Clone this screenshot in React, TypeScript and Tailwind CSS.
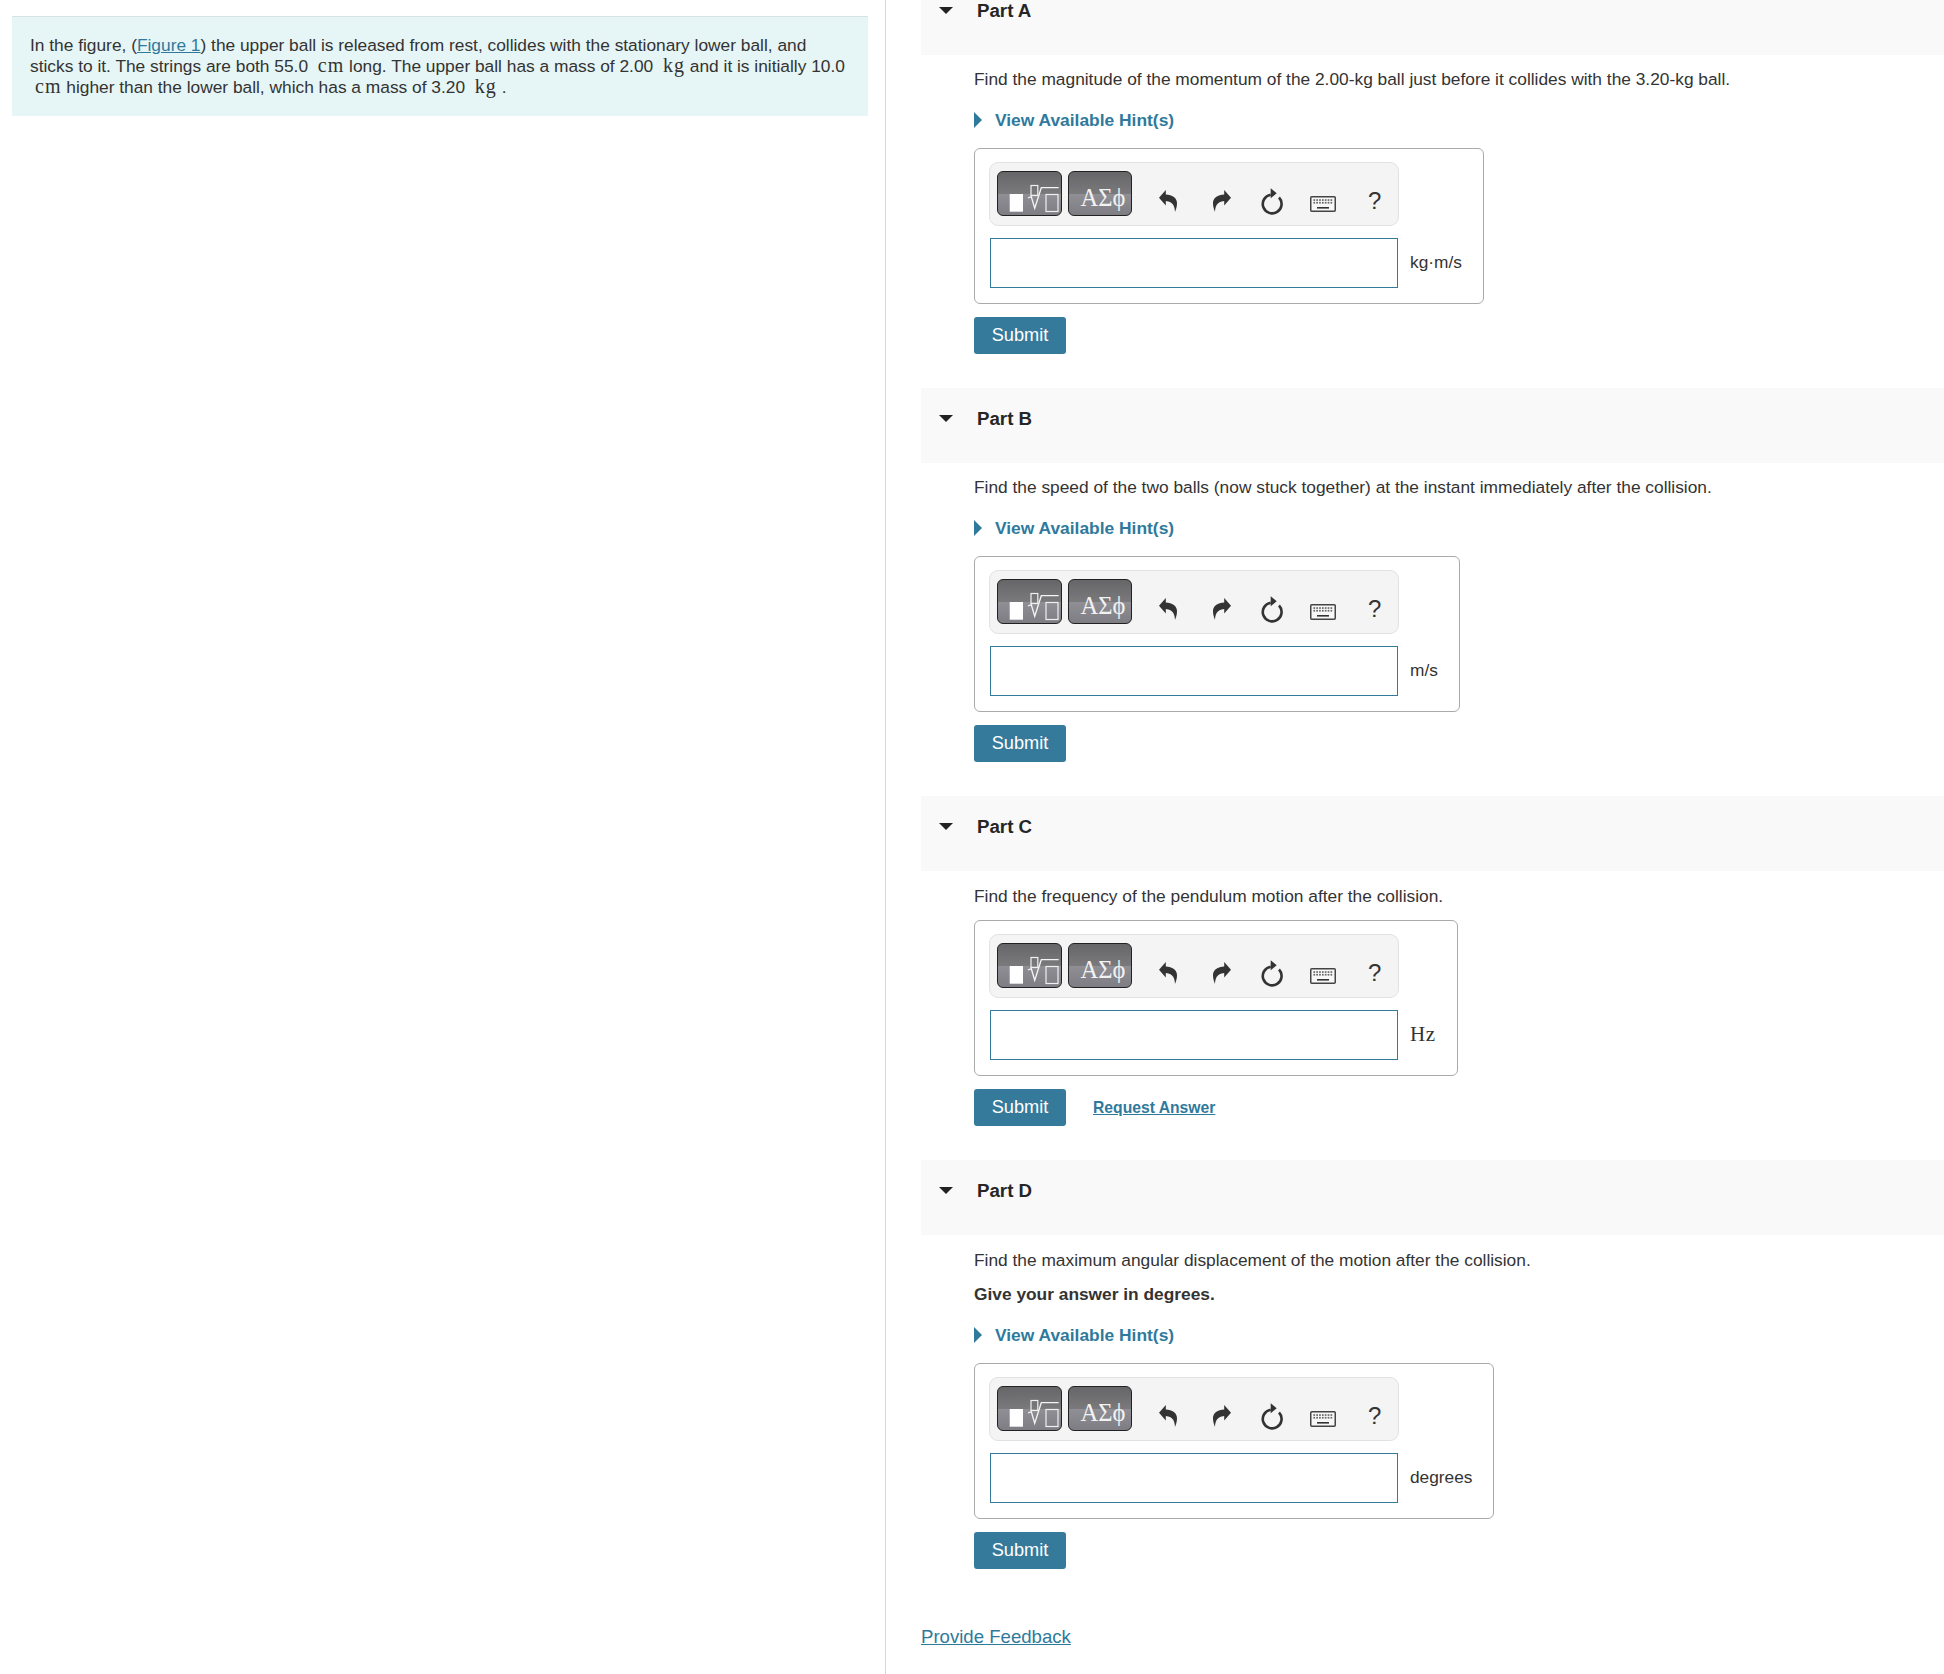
import type { ReactNode } from "react";

const SANS = "font-['Liberation_Sans',Arial,sans-serif]";
const MATH = "font-['Liberation_Serif','Times_New_Roman',serif]";

function Unit({ children }: { children: ReactNode }) {
  return <span className={`${MATH} ml-[5px] text-[20px] leading-[0] tracking-[1px]`}>{children}</span>;
}

function UndoIcon({ flip = false }: { flip?: boolean }) {
  return (
    <svg width="19" height="22" viewBox="0 0 19 22" className={flip ? "mt-[27px] -scale-x-100" : "mt-[27px]"}>
      <path d="M0 7.7 L6.8 0 V4.5 C13 4.5 18.5 8 18 14 C17.8 17 17 19.5 16 22 C15.8 17 14.5 11.5 6.8 11 V15.4 Z" fill="#333" />
    </svg>
  );
}

function ResetIcon() {
  return (
    <svg width="24" height="30" viewBox="0 0 24 30" className="mt-[22px]">
      <path d="M10.7 9.7 A9.4 9.4 0 1 0 19 12.5" fill="none" stroke="#333" strokeWidth="2.6" />
      <path d="M10.7 3.3 L16.7 8.3 L10.7 13.3 Z" fill="#333" />
    </svg>
  );
}

function KeyboardIcon() {
  const keys = [];
  for (let r = 0; r < 2; r++) {
    for (let c = 0; c < 7; c++) {
      keys.push(<rect key={`${r}-${c}`} x={3.4 + c * 2.85} y={3.2 + r * 2.7} width="1.7" height="1.7" fill="#666" />);
    }
  }
  return (
    <svg width="26" height="16" viewBox="0 0 26 16" className="mt-[33px]">
      <rect x="0.75" y="0.75" width="24.5" height="14.5" rx="1" fill="#f7f7f7" stroke="#444" strokeWidth="1.5" />
      {keys}
      <rect x="7" y="11" width="12" height="1.6" fill="#333" />
    </svg>
  );
}

function TemplateButton() {
  return (
    <div className="relative h-[45px] w-[65px] rounded-[6px] border border-[#222] bg-[linear-gradient(#666668,#7a7a7c_51%,#8f8f95_51%,#7d7d83)]">
      <svg width="65" height="45" viewBox="0 0 65 45" className="absolute -left-px -top-px">
        <rect x="12.7" y="23" width="13.3" height="17.7" fill="#fff" />
        <rect x="34" y="14.5" width="6.8" height="10" fill="none" stroke="#f0f0f0" strokeWidth="1.2" />
        <path d="M31 27 L34.3 25.7 L37.7 37.3 L44.3 16.7 H61.7" fill="none" stroke="#f4f4f4" strokeWidth="1.3" />
        <rect x="49" y="23.5" width="12" height="17" fill="none" stroke="#f0f0f0" strokeWidth="1.2" />
      </svg>
    </div>
  );
}

function SymbolButton() {
  return (
    <div className={`ml-[6px] flex h-[45px] w-[64px] items-center justify-center rounded-[6px] border border-[#222] bg-[linear-gradient(#666668,#7a7a7c_51%,#8f8f95_51%,#7d7d83)] ${MATH} text-[24.5px] text-[#f2f2f2]`}>
      <span className="ml-[6px] mt-[10px]">ΑΣϕ</span>
    </div>
  );
}

function AnswerBox({ unit, serifUnit, hint }: { unit: string; serifUnit?: boolean; hint?: boolean }) {
  return (
    <div className={`${hint ? "mt-[18px]" : "mt-[12px]"} w-fit rounded-[6px] border border-[#aaaaaa] pb-[15px] pl-[14px] pr-[21px] pt-[13px]`}>
      <div className="flex h-[64px] w-[410px] items-start rounded-[9px] border border-[#e2e2e2] bg-[#f4f4f4] pl-[7px] pt-[8px]">
        <TemplateButton />
        <SymbolButton />
        <div className="-mt-[8px] ml-[27px] flex items-start">
          <UndoIcon />
          <div className="ml-[34px]">
            <UndoIcon flip />
          </div>
          <div className="ml-[29px]">
            <ResetIcon />
          </div>
          <div className="ml-[26px]">
            <KeyboardIcon />
          </div>
          <span className="ml-[32px] mt-[23px] text-[24px] leading-[30px] text-[#333]">?</span>
        </div>
      </div>
      <div className="mt-[12px] flex items-center">
        <div className="ml-[1px] h-[50px] w-[408px] border border-[#357a9b] bg-white" />
        <span className={serifUnit ? `${MATH} ml-[12px] text-[21px] tracking-[0.5px] text-[#333]` : "ml-[12px] text-[17.3px] text-[#333]"}>{unit}</span>
      </div>
    </div>
  );
}

function Part({
  name,
  question,
  bold,
  hint,
  unit,
  serifUnit,
  request,
}: {
  name: string;
  question: string;
  bold?: string;
  hint?: boolean;
  unit: string;
  serifUnit?: boolean;
  request?: boolean;
}) {
  return (
    <section className="mb-[34px]">
      <div className="flex h-[75px] items-start bg-[#f9f9f9] pl-[18px] pt-[21px]">
        <div className="mt-[6px] h-0 w-0 border-x-[7px] border-t-[7px] border-x-transparent border-t-[#222]" />
        <h2 className="ml-[24px] text-[18.7px] font-bold leading-[20px] text-[#262626]">{name}</h2>
      </div>
      <div className="pl-[53px]">
        <p className={`${hint && !bold ? "mt-[12px]" : "mt-[13px]"} text-[17.33px] leading-[24px] text-[#333]`}>{question}</p>
        {bold ? <p className="mt-[10px] text-[17.33px] font-bold leading-[24px] text-[#333]">{bold}</p> : null}
        {hint ? (
          <div className="mt-[19px] flex h-[20px] items-center text-[17.4px] font-bold text-[#2f7a9c]">
            <div className="h-0 w-0 border-y-[8px] border-l-[8px] border-y-transparent border-l-[#2f7a9c]" />
            <span className="ml-[13px]">View Available Hint(s)</span>
          </div>
        ) : null}
        <AnswerBox unit={unit} serifUnit={serifUnit} hint={hint} />
        <div className="mt-[13px] flex items-center">
          <button type="button" className="h-[37px] w-[92px] rounded-[3px] bg-[#357a9b] text-[18.2px] text-white">
            Submit
          </button>
          {request ? (
            <a className="ml-[27px] text-[15.7px] font-bold text-[#2f7a9c] underline">Request Answer</a>
          ) : null}
        </div>
      </div>
    </section>
  );
}

export default function App() {
  return (
    <div className={`flex h-[1674px] w-[1944px] overflow-hidden bg-white ${SANS}`}>
      <div className="w-[886px] shrink-0 border-r border-[#cddbe3] pl-[12px] pr-[17px] pt-[16px]">
        <div className="h-[100px] border-t border-[#d8e3e4] bg-[#e6f5f5] pl-[18px] pr-[14px] pt-[18px] text-[17.33px] leading-[21px] text-[#333]">
          In the figure, (<a className="text-[#2f7a9c] underline">Figure 1</a>) the upper ball is released from rest, collides with the stationary lower ball, and sticks to it. The strings are both 55.0 <Unit>cm</Unit> long. The upper ball has a mass of 2.00 <Unit>kg</Unit> and it is initially 10.0 <Unit>cm</Unit> higher than the lower ball, which has a mass of 3.20 <Unit>kg</Unit> .
        </div>
      </div>
      <main className="-mt-[20px] flex-1 pl-[35px]">
        <Part
          name="Part A"
          question="Find the magnitude of the momentum of the 2.00-kg ball just before it collides with the 3.20-kg ball."
          hint
          unit="kg·m/s"
        />
        <Part
          name="Part B"
          question="Find the speed of the two balls (now stuck together) at the instant immediately after the collision."
          hint
          unit="m/s"
        />
        <Part
          name="Part C"
          question="Find the frequency of the pendulum motion after the collision."
          unit="Hz"
          serifUnit
          request
        />
        <Part
          name="Part D"
          question="Find the maximum angular displacement of the motion after the collision."
          bold="Give your answer in degrees."
          hint
          unit="degrees"
        />
        <a className="mt-[54px] block text-[18.6px] text-[#2f7a9c] underline">Provide Feedback</a>
      </main>
    </div>
  );
}
